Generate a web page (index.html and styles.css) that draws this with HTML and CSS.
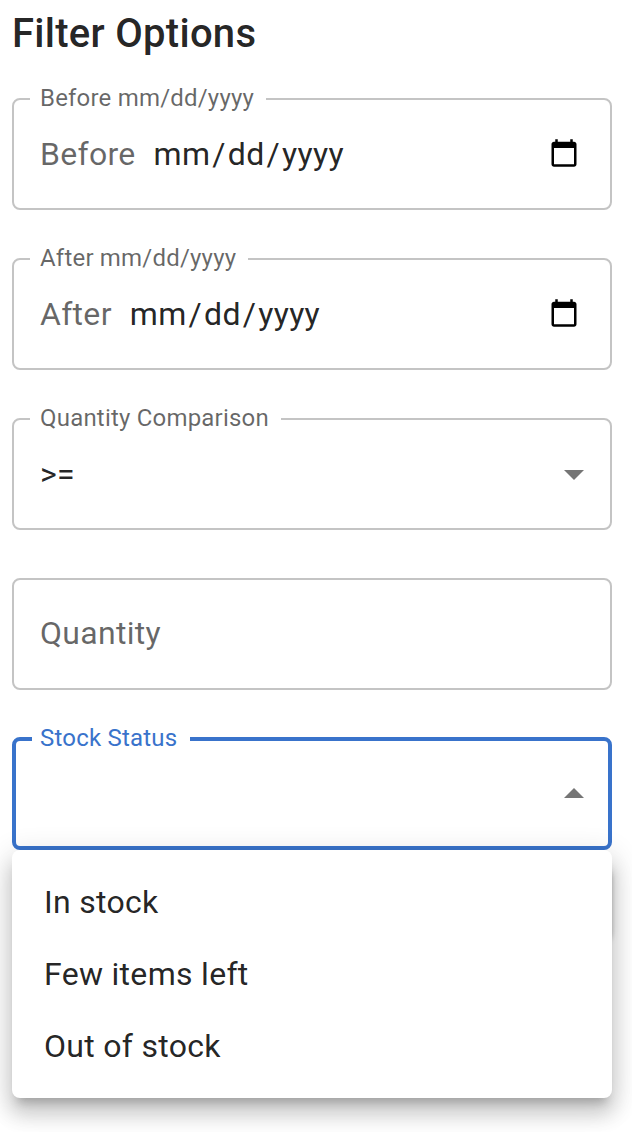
FILE: index.html
```html
<!DOCTYPE html>
<html lang="en">
<head>
<meta charset="utf-8">
<title>Filter Options</title>
<link rel="stylesheet" href="styles.css">
</head>
<body>
<main class="filters">
  <h1 class="title">Filter Options</h1>
  <fieldset class="field">
    <legend class="label">Before mm/dd/yyyy</legend>
    <div class="row"><span class="prefix">Before</span><span class="date">mm<span class="slash">/</span>dd<span class="slash">/</span>yyyy</span>
      <svg class="calendar" viewBox="0 0 24 24"><path d="M20 3h-1V1h-2v2H7V1H5v2H4c-1.1 0-2 .9-2 2v16c0 1.100.9 2 2 2h16c1.100 0 2-.9 2-2V5c0-1.100-.9-2-2-2zm0 18H4V8h16v13z"/></svg>
    </div>
  </fieldset>
  <fieldset class="field">
    <legend class="label">After mm/dd/yyyy</legend>
    <div class="row"><span class="prefix">After</span><span class="date">mm<span class="slash">/</span>dd<span class="slash">/</span>yyyy</span>
      <svg class="calendar" viewBox="0 0 24 24"><path d="M20 3h-1V1h-2v2H7V1H5v2H4c-1.1 0-2 .9-2 2v16c0 1.100.9 2 2 2h16c1.100 0 2-.9 2-2V5c0-1.100-.9-2-2-2zm0 18H4V8h16v13z"/></svg>
    </div>
  </fieldset>
  <fieldset class="field">
    <legend class="label">Quantity Comparison</legend>
    <div class="row"><span class="value">&gt;=</span>
      <svg class="arrow down" viewBox="0 0 20 10"><path d="M0 0h20L10 10z"/></svg>
    </div>
  </fieldset>
  <div class="field plain"><div class="row"><span class="prefix">Quantity</span></div></div>
  <fieldset class="field focused">
    <legend class="label">Stock Status</legend>
    <div class="row">
      <svg class="arrow up" viewBox="0 0 20 10"><path d="M0 10h20L10 0z"/></svg>
    </div>
  </fieldset>
  <div class="actions">
    <div class="button"></div>
    <ul class="menu">
      <li class="option">In stock</li>
      <li class="option">Few items left</li>
      <li class="option">Out of stock</li>
    </ul>
  </div>
</main>
</body>
</html>
```
FILE: styles.css
```css
* { box-sizing: border-box; }
body { margin: 0; background: #fff; color: rgba(0,0,0,.87); font-family: Roboto, sans-serif; }
.filters { height: 1132px; padding: 8px 20px 0 12px; overflow: hidden; }
.title { margin: 0 0 25px; height: 52px; font-size: 40px; line-height: 51px; font-weight: 500; letter-spacing: .28px; white-space: nowrap; }
.field { margin: 0 0 35px; padding: 0 26px 0 16px; height: 125px; min-width: 0; border: 2px solid #c4c4c4; border-radius: 8px; }
.label { margin: 0; padding: 0 12px 2px 10px; height: 28px; font-size: 24px; line-height: 26px; letter-spacing: .2px; color: rgba(0,0,0,.6); white-space: nowrap; }
.row { display: flex; align-items: center; height: 82px; padding-left: 10px; font-size: 32px; letter-spacing: .3px; white-space: nowrap; }
.prefix { color: rgba(0,0,0,.6); }
.date { margin-left: 18px; }
.slash { margin: 0 2px; }
.calendar { width: 30px; height: 30px; margin: 0 5px 2px auto; fill: #000; }
.arrow { width: 20px; height: 10px; margin-left: auto; fill: rgba(0,0,0,.54); }
.down { margin-top: 2px; }
.up { margin-bottom: 2px; }
.plain { height: 112px; margin-top: 48px; padding: 12px 26px 0 16px; }
.focused { border: 4px solid #3973cb; padding: 0 24px 0 16px; margin-bottom: 0; }
.focused .label { padding-left: 8px; padding-right: 13px; color: #3973cb; }
.actions { position: relative; padding-top: 16px; }
.button { width: 160px; height: 72px; margin-left: auto; border-radius: 8px; box-shadow: 0 6px 2px -4px rgba(0,0,0,.2), 0 4px 4px rgba(0,0,0,.14), 0 2px 10px rgba(0,0,0,.12); }
.menu { position: absolute; left: 0; right: 0; top: 0; height: 248px; margin: 0; padding: 16px 0; list-style: none; background: #fff; border-radius: 8px; box-shadow: 0 10px 10px -6px rgba(0,0,0,.2), 0 16px 20px 2px rgba(0,0,0,.14), 0 6px 28px 4px rgba(0,0,0,.12); }
.option { height: 72px; padding-left: 32px; font-size: 32px; line-height: 72px; letter-spacing: .3px; }
```
